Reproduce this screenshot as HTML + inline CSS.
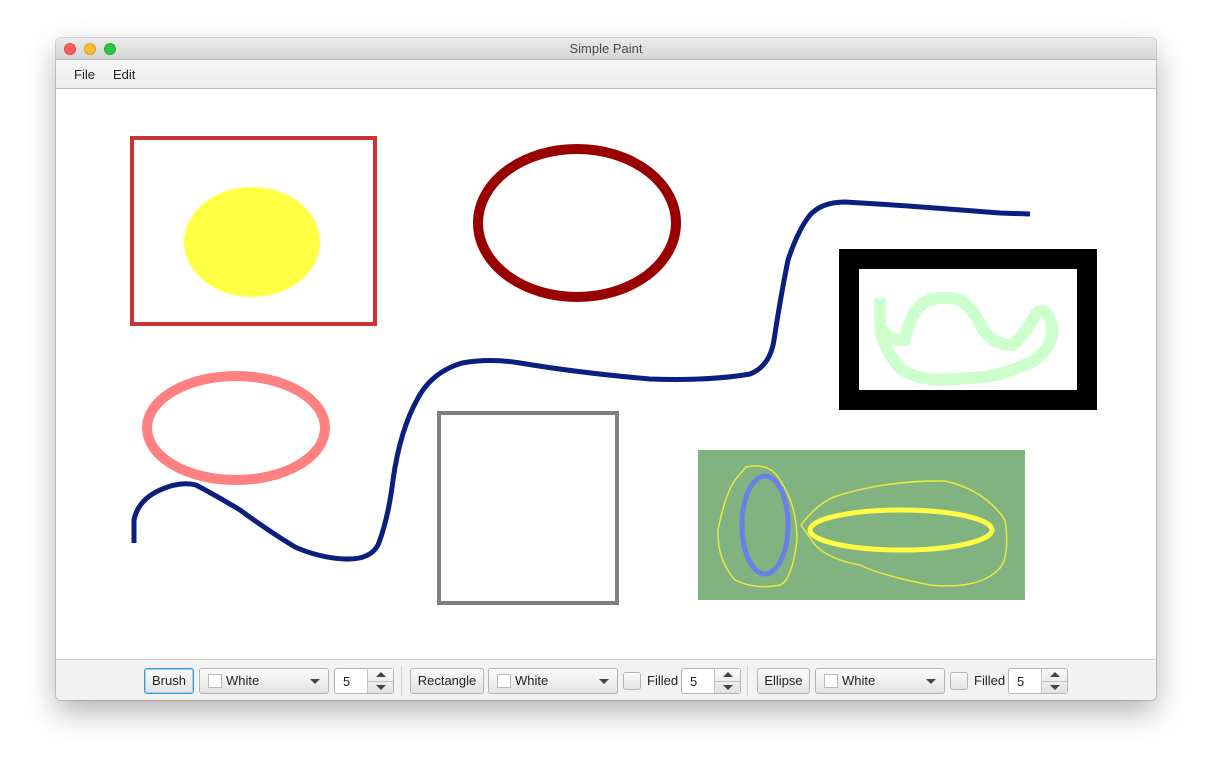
<!DOCTYPE html>
<html><head><meta charset="utf-8"><style>
*{margin:0;padding:0;box-sizing:border-box}
body{width:1212px;height:774px;background:#fff;position:relative;overflow:hidden;font-family:"Liberation Sans",sans-serif;font-size:13px;color:#222}
.win{position:absolute;left:56px;top:38px;width:1100px;height:662px;border-radius:5px;background:#fff;box-shadow:0 12px 30px rgba(0,0,0,.3),0 0 0 1px rgba(0,0,0,.15);overflow:hidden}
.title{position:absolute;left:0;top:0;width:1100px;height:22px;background:linear-gradient(#ebebeb,#d5d5d5);border-bottom:1px solid #b5b5b5;text-align:center;line-height:22px;color:#4a4a4a;font-size:13px}
.dot{position:absolute;top:5px;width:12px;height:12px;border-radius:50%}
.menu{position:absolute;left:0;top:22px;width:1100px;height:29px;background:linear-gradient(#f7f7f7,#ececec);border-bottom:1px solid #bdbdbd}
.menu span{position:absolute;top:7px;font-size:13px;color:#222}
.tb{position:absolute;left:0;top:621px;width:1100px;height:41px;background:#f2f2f2;border-top:1px solid #d0d0d0}
.b{position:absolute;top:8px;height:26px;border:1px solid #b4b4b4;border-radius:3px;background:linear-gradient(#fafafa,#e3e3e3);line-height:24px;text-align:center;font-size:13px}
.sp{position:absolute;top:8px;height:26px;border:1px solid #b4b4b4;border-radius:3px;background:#fff}
.sp .n{position:absolute;left:8px;top:5px}
.sp .ar{position:absolute;right:0;top:0;width:26px;height:24px;background:linear-gradient(#f8f8f8,#e2e2e2);border-left:1px solid #c4c4c4}
.sp .ar:after{content:"";position:absolute;left:0;right:0;top:12px;border-top:1px solid #c4c4c4}
.up{position:absolute;left:8px;top:3px;border-left:5px solid transparent;border-right:5px solid transparent;border-bottom:5px solid #444}
.dn{position:absolute;left:8px;top:16px;border-left:5px solid transparent;border-right:5px solid transparent;border-top:5px solid #444}
.sw{position:absolute;left:8px;top:5px;width:14px;height:14px;background:#fff;border:1px solid #bbb}
.tri{position:absolute;right:8px;top:10px;border-left:5px solid transparent;border-right:5px solid transparent;border-top:5px solid #444}
.cb{position:absolute;top:12px;width:18px;height:18px;border:1px solid #b4b4b4;border-radius:3px;background:linear-gradient(#fafafa,#e3e3e3)}
.sep{position:absolute;top:6px;width:1px;height:30px;background:#d3d3d3}
</style></head><body>
<div class="win">
<div class="title">Simple Paint
<div class="dot" style="left:8px;background:#fc5f57;border:1px solid #e0443e"></div>
<div class="dot" style="left:28px;background:#fdbc2e;border:1px solid #dea123"></div>
<div class="dot" style="left:48px;background:#28c840;border:1px solid #1aab29"></div>
</div>
<div class="menu"><span style="left:18px">File</span><span style="left:57px">Edit</span></div>
<div class="tb">
<div class="b" style="left:88px;width:50px;border-color:#3a9ad9;box-shadow:0 0 0 1px #9fd0f0 inset">Brush</div>
<div class="b" style="left:143px;width:130px;text-align:left;padding-left:26px">White<div class="sw"></div><div class="tri"></div></div>
<div class="sp" style="left:278px;width:60px"><span class="n">5</span><div class="ar"><div class="up"></div><div class="dn"></div></div></div>
<div class="sep" style="left:345px"></div>
<div class="b" style="left:354px;width:74px">Rectangle</div>
<div class="b" style="left:432px;width:130px;text-align:left;padding-left:26px">White<div class="sw"></div><div class="tri"></div></div>
<div class="cb" style="left:567px"></div><span style="position:absolute;left:591px;top:13px">Filled</span>
<div class="sp" style="left:625px;width:60px"><span class="n">5</span><div class="ar"><div class="up"></div><div class="dn"></div></div></div>
<div class="sep" style="left:691px"></div>
<div class="b" style="left:701px;width:53px">Ellipse</div>
<div class="b" style="left:759px;width:130px;text-align:left;padding-left:26px">White<div class="sw"></div><div class="tri"></div></div>
<div class="cb" style="left:894px"></div><span style="position:absolute;left:918px;top:13px">Filled</span>
<div class="sp" style="left:952px;width:60px"><span class="n">5</span><div class="ar"><div class="up"></div><div class="dn"></div></div></div>
</div>
</div>
<svg style="position:absolute;left:0;top:0" width="1212" height="774" viewBox="0 0 1212 774">
<rect x="132" y="138" width="243" height="186" fill="none" stroke="#cc3333" stroke-width="4"/>
<ellipse cx="252" cy="242" rx="68" ry="55" fill="#ffff44"/>
<ellipse cx="577" cy="223" rx="99" ry="74" fill="none" stroke="#990000" stroke-width="10"/>
<ellipse cx="236" cy="428" rx="89" ry="52" fill="none" stroke="#ff8080" stroke-width="10"/>
<rect x="439" y="413" width="178" height="190" fill="none" stroke="#808080" stroke-width="4"/>
<rect x="849" y="259" width="238" height="141" fill="none" stroke="#000" stroke-width="20"/>
<path d="M880 298 L880 325 Q885 340 905 340 Q910 312 925 302 Q940 295 960 300 Q975 310 983 330 Q995 345 1012 345 Q1025 335 1035 315 Q1045 303 1052 325 Q1055 345 1035 360 Q1010 373 985 377 L940 380 Q905 378 895 362 Q885 348 880 330" fill="none" stroke="#ccffcc" stroke-width="12" stroke-linejoin="round"/>
<rect x="698" y="450" width="327" height="150" fill="#80b380"/>
<path d="M746 467 Q770 462 780 480 Q797 505 797 540 Q792 580 780 585 Q755 590 735 580 Q717 560 718 530 Q725 495 735 480 Z" fill="none" stroke="#e8e840" stroke-width="1.5"/>
<path d="M801 525 Q820 500 840 495 Q890 480 945 481 Q985 490 1005 520 Q1010 555 1000 568 Q980 590 930 585 Q880 575 860 565 Q830 560 815 545 Z" fill="none" stroke="#e8e840" stroke-width="1.5"/>
<ellipse cx="765" cy="525" rx="23" ry="49" fill="none" stroke="#6b80e6" stroke-width="5"/>
<ellipse cx="901" cy="530" rx="91" ry="20" fill="none" stroke="#ffff44" stroke-width="5"/>
<path d="M134 543 L134 520 Q138 500 160 490 Q180 481 196 485 Q215 495 240 510 Q270 532 295 547 Q320 558 345 559 Q370 560 378 545 Q388 520 393 480 Q400 430 418 398 Q432 372 462 363 Q490 358 520 363 Q580 373 650 379 Q710 381 750 374 Q770 366 774 340 Q780 300 788 260 Q798 230 810 215 Q822 202 845 202 Q900 205 1000 213 L1030 214" fill="none" stroke="#0a1f80" stroke-width="5" stroke-linejoin="round"/>
</svg>
</body></html>
